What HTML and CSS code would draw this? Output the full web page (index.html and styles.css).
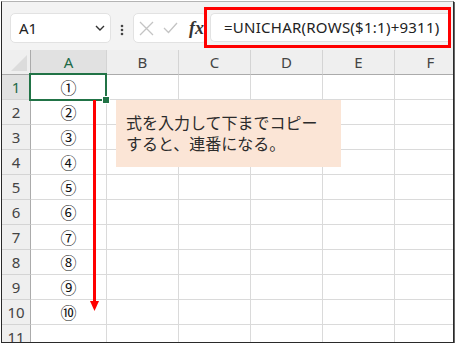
FILE: index.html
```html
<!DOCTYPE html>
<html lang="ja">
<head>
  <meta charset="UTF-8">
  <title>UNICHAR 連番</title>
  <link rel="stylesheet" href="styles.css">
</head>
<body>
  <div class="frame">
    <div class="formula-bar">
      <div class="name-box">
        <span>A1</span>
        <svg class="chevron" width="10" height="6" viewBox="0 0 10 6"><path d="M1 1 L5 5 L9 1" fill="none" stroke="#333" stroke-width="1.4"/></svg>
      </div>
      <div class="dots">
        <svg width="4" height="12" viewBox="0 0 4 12"><circle cx="2" cy="2" r="1.3" fill="#444"/><circle cx="2" cy="6" r="1.3" fill="#444"/><circle cx="2" cy="10" r="1.3" fill="#444"/></svg>
      </div>
      <div class="fx-box">
        <svg width="15" height="15" viewBox="0 0 15 15"><path d="M1 1 L14 14 M14 1 L1 14" stroke="#c4c4c4" stroke-width="1.3"/></svg>
        <svg width="15" height="12" viewBox="0 0 15 12"><path d="M1 6 L5.5 10.5 L14 1" fill="none" stroke="#c4c4c4" stroke-width="1.3"/></svg>
        <span class="fx">fx</span>
      </div>
      <div class="formula-wrap">
        <div class="formula-input">=UNICHAR(ROWS($1:1)+9311)</div>
      </div>
    </div>

    <div class="sheet">
      <div class="corner"><span class="tri"></span></div>
      <div class="col-head active">A</div>
      <div class="col-head">B</div>
      <div class="col-head">C</div>
      <div class="col-head">D</div>
      <div class="col-head">E</div>
      <div class="col-head">F</div>

      <div class="row-head active">1</div><div class="cell num">①</div><div class="cell"></div><div class="cell"></div><div class="cell"></div><div class="cell"></div><div class="cell"></div>
      <div class="row-head">2</div><div class="cell num">②</div><div class="cell"></div><div class="cell"></div><div class="cell"></div><div class="cell"></div><div class="cell"></div>
      <div class="row-head">3</div><div class="cell num">③</div><div class="cell"></div><div class="cell"></div><div class="cell"></div><div class="cell"></div><div class="cell"></div>
      <div class="row-head">4</div><div class="cell num">④</div><div class="cell"></div><div class="cell"></div><div class="cell"></div><div class="cell"></div><div class="cell"></div>
      <div class="row-head">5</div><div class="cell num">⑤</div><div class="cell"></div><div class="cell"></div><div class="cell"></div><div class="cell"></div><div class="cell"></div>
      <div class="row-head">6</div><div class="cell num">⑥</div><div class="cell"></div><div class="cell"></div><div class="cell"></div><div class="cell"></div><div class="cell"></div>
      <div class="row-head">7</div><div class="cell num">⑦</div><div class="cell"></div><div class="cell"></div><div class="cell"></div><div class="cell"></div><div class="cell"></div>
      <div class="row-head">8</div><div class="cell num">⑧</div><div class="cell"></div><div class="cell"></div><div class="cell"></div><div class="cell"></div><div class="cell"></div>
      <div class="row-head">9</div><div class="cell num">⑨</div><div class="cell"></div><div class="cell"></div><div class="cell"></div><div class="cell"></div><div class="cell"></div>
      <div class="row-head">10</div><div class="cell num">⑩</div><div class="cell"></div><div class="cell"></div><div class="cell"></div><div class="cell"></div><div class="cell"></div>
      <div class="row-head">11</div><div class="cell"></div><div class="cell"></div><div class="cell"></div><div class="cell"></div><div class="cell"></div><div class="cell"></div>

      <div class="selection"><span class="handle"></span></div>

      <svg class="arrow" width="11" height="212" viewBox="0 0 11 212">
        <rect x="3" y="0" width="3" height="202" fill="#ff0000"/>
        <path d="M0 201 L9 201 L4.5 211 Z" fill="#ff0000"/>
      </svg>

      <div class="callout">
        <p>式を入力して下までコピー</p>
        <p>すると、連番になる。</p>
      </div>
    </div>
  </div>
</body>
</html>
```

FILE: styles.css
```css
body {
  margin: 0;
  padding: 0;
  background: #ffffff;
  font-family: "Noto Sans", "Noto Sans CJK JP", sans-serif;
}
.frame {
  margin: 1px 0 0 1px;
  width: 453px;
  height: 342px;
  box-sizing: border-box;
  border: 1px solid #2a2a2a;
  border-top-color: #b4b4b4;
  box-shadow: 1px 1px 0 #666;
  overflow: hidden;
  background: #ffffff;
}
.formula-bar {
  display: flex;
  align-items: flex-start;
  height: 48px;
  padding-left: 8px;
  background: #f3f3f3;
}
.name-box {
  display: flex;
  align-items: center;
  justify-content: space-between;
  box-sizing: border-box;
  width: 101px;
  height: 30px;
  margin-top: 11px;
  padding: 0 5px 0 8px;
  background: #ffffff;
  border: 1px solid #e2e2e2;
  border-radius: 5px;
  font-size: 15px;
  color: #222;
}
.dots {
  display: flex;
  justify-content: center;
  width: 22px;
  margin-top: 22px;
}
.fx-box {
  display: flex;
  align-items: center;
  gap: 9px;
  box-sizing: border-box;
  width: 74px;
  height: 30px;
  margin-top: 11px;
  margin-right: -3px;
  padding-left: 5px;
  background: #ffffff;
  border: 1px solid #e2e2e2;
  border-radius: 5px;
}
.fx {
  font-family: "Liberation Serif", serif;
  font-style: italic;
  font-weight: bold;
  font-size: 18px;
  color: #333;
  margin-left: 2px;
}
.formula-wrap {
  position: relative;
  box-sizing: border-box;
  width: 247px;
  height: 41px;
  margin-top: 5px;
  padding: 3px 0 3px 3px;
  border: 3px solid #ff0000;
  background: #f3f3f3;
}
.formula-input {
  box-sizing: border-box;
  height: 29px;
  padding-left: 13px;
  background: #ffffff;
  border: 1px solid #e2e2e2;
  border-right: none;
  border-radius: 5px 0 0 5px;
  font-size: 15px;
  letter-spacing: 0.25px;
  line-height: 27px;
  color: #222;
  white-space: nowrap;
}
.sheet {
  position: relative;
  display: grid;
  grid-template-columns: 29px 76px 72px 72px 72px 72px 72px;
  grid-template-rows: 25px repeat(11, 25px);
}
.corner,
.col-head,
.row-head,
.cell {
  box-sizing: border-box;
  border-right: 1px solid #dadada;
  border-bottom: 1px solid #dadada;
}
.corner {
  position: relative;
  background: #efefef;
  border-bottom: 1px solid #ababab;
  border-right: 1px solid #ababab;
}
.tri {
  position: absolute;
  right: 3px;
  bottom: 3px;
  width: 0;
  height: 0;
  border-left: 16px solid transparent;
  border-bottom: 16px solid #dcdcdc;
}
.col-head {
  display: flex;
  align-items: center;
  justify-content: center;
  background: #efefef;
  border-bottom: 1px solid #ababab;
  border-right-color: #d4d4d4;
  font-size: 15px;
  color: #444;
}
.row-head {
  display: flex;
  align-items: center;
  justify-content: center;
  background: #efefef;
  border-right: 1px solid #ababab;
  border-bottom-color: #d4d4d4;
  font-size: 15px;
  color: #444;
}
.col-head.active,
.row-head.active {
  background: #e1e1e1;
  color: #1d6a48;
}
.cell.num {
  display: flex;
  align-items: center;
  justify-content: center;
  font-family: "Noto Sans CJK JP", sans-serif;
  font-size: 16px;
  color: #111;
}
.selection {
  position: absolute;
  left: 27px;
  top: 23px;
  width: 78px;
  height: 28px;
  box-sizing: border-box;
  border: 2px solid #217346;
}
.handle {
  position: absolute;
  right: -5px;
  bottom: -5px;
  width: 6px;
  height: 6px;
  background: #217346;
  border: 1px solid #ffffff;
}
.arrow {
  position: absolute;
  left: 88px;
  top: 50px;
}
.callout {
  position: absolute;
  left: 114px;
  top: 50px;
  width: 225px;
  height: 67px;
  box-sizing: border-box;
  padding: 12px 0 0 10px;
  background: #fbe5d6;
  font-family: "Noto Sans CJK JP", sans-serif;
  font-size: 16px;
  line-height: 21px;
  color: #2b2b2b;
}
.callout p {
  margin: 0;
}
```
